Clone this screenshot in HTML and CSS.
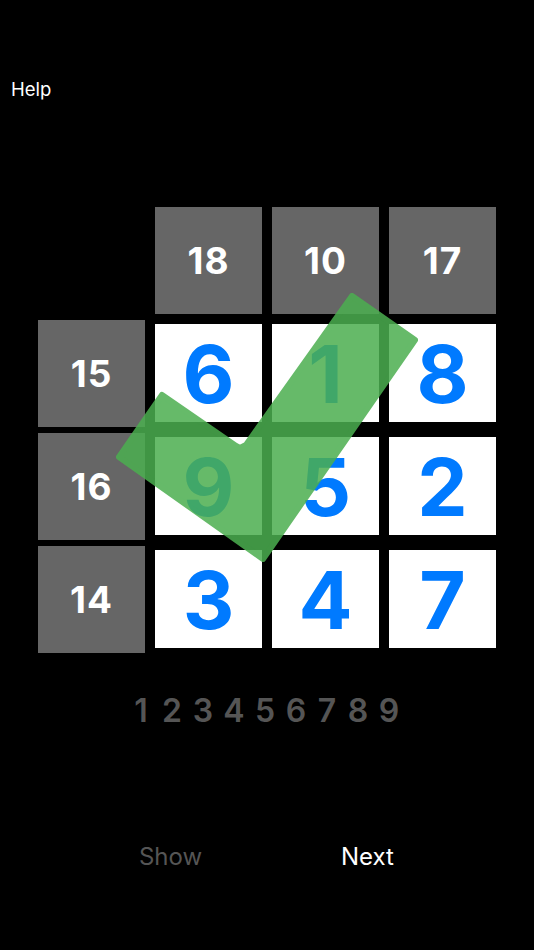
FILE: index.html
```html
<!DOCTYPE html>
<html lang="en">
<head>
    <meta charset="UTF-8">
    <meta name="viewport" content="width=device-width, initial-scale=1.0">
    <title>Number Square</title>
    <link rel="stylesheet" href="styles.css">
</head>
<body>
    <button class="help">Help</button>

    <div class="board">
        <div class="spacer"></div>
        <div class="cell sum">18</div>
        <div class="cell sum">10</div>
        <div class="cell sum">17</div>

        <div class="cell sum">15</div>
        <div class="cell digit">6</div>
        <div class="cell digit">1</div>
        <div class="cell digit">8</div>

        <div class="cell sum">16</div>
        <div class="cell digit">9</div>
        <div class="cell digit">5</div>
        <div class="cell digit">2</div>

        <div class="cell sum">14</div>
        <div class="cell digit">3</div>
        <div class="cell digit">4</div>
        <div class="cell digit">7</div>
    </div>

    <div class="palette">
        <span>1</span><span>2</span><span>3</span><span>4</span><span>5</span><span>6</span><span>7</span><span>8</span><span>9</span>
    </div>

    <div class="actions">
        <button class="disabled">Show</button>
        <button>Next</button>
    </div>

    <!-- solved overlay -->
    <svg class="check" viewBox="0 0 534 950" xmlns="http://www.w3.org/2000/svg">
        <polygon points="352,296 415,340 263,559 119,457 162,395 236,446 240,448 246,445" />
    </svg>
</body>
</html>
```

FILE: styles.css
```css
* {
    margin: 0;
    padding: 0;
    box-sizing: border-box;
    font-family: Inter, 'Liberation Sans', sans-serif;
}

html, body {
    height: 950px;
    overflow: hidden;
}

body {
    position: relative;
    background-color: #000;
    color: #fff;
    padding-top: 77px;
}

button {
    background: none;
    border: none;
    color: #fff;
}

.help {
    display: block;
    margin-left: 11px;
    height: 24px;
    line-height: 24px;
    font-size: 18.5px;
    font-weight: 400;
}

.board {
    display: grid;
    grid-template-columns: repeat(4, 107px);
    grid-auto-rows: 107px;
    gap: 6px 10px;
    margin: 106px 0 0 38px;
}

.cell {
    display: flex;
    align-items: center;
    justify-content: center;
}

.sum {
    background-color: #666;
    font-size: 37px;
    font-weight: 700;
    letter-spacing: 1px;
}

.digit {
    align-self: center;
    height: 98px;
    margin-bottom: 1px;
    background-color: #fff;
    color: #007aff;
    font-size: 80px;
    font-weight: 650;
}

.palette {
    display: flex;
    justify-content: center;
    margin-top: 38px;
    margin-right: 4px;
    height: 40px;
    line-height: 40px;
    color: #555;
    font-size: 32px;
    font-weight: 600;
}

.palette span {
    width: 31px;
    text-align: center;
}

.actions {
    display: grid;
    grid-template-columns: 197px 197px;
    margin: 111px 0 0 72px;
}

.actions button {
    height: 30px;
    line-height: 30px;
    font-size: 24px;
    font-weight: 400;
}

.actions .disabled {
    color: #555;
}

.check {
    position: absolute;
    top: 0;
    left: 0;
    width: 534px;
    height: 950px;
    opacity: 0.85;
}

.check polygon {
    fill: #4caf50;
    stroke: #4caf50;
    stroke-width: 6;
    stroke-linejoin: round;
}
```
